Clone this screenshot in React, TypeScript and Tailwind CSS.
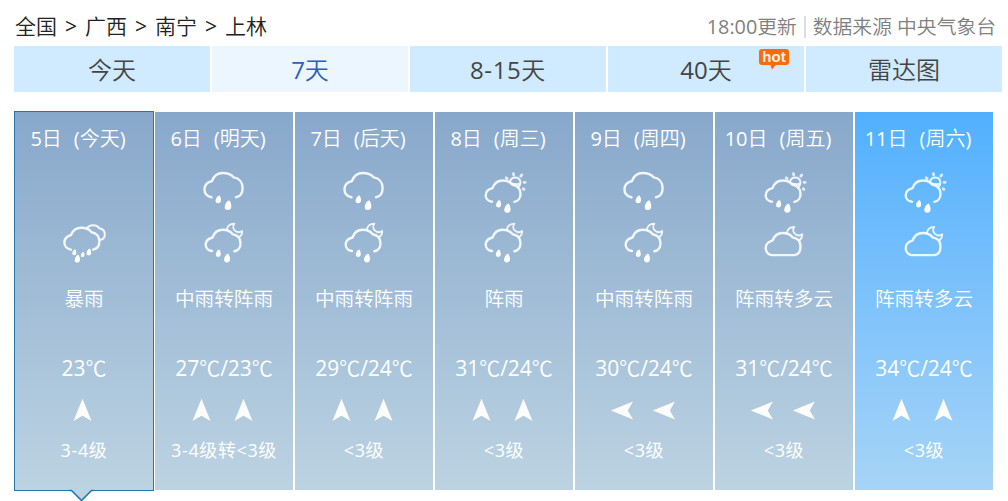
import { Fragment } from "react";
import clsx from "clsx";

type IconName = "storm" | "rain" | "showerDay" | "showerNight" | "cloudyNight";
type Wind = "up" | "left";

interface Day {
  date: string;
  label: string;
  day?: IconName;
  night: IconName;
  weather: string;
  temps: number[];
  wind: Wind[];
  level: string;
}

const CRUMBS = ["全国", "广西", "南宁", "上林"];
const TABS = ["今天", "7天", "8-15天", "40天", "雷达图"];

const DAYS: Day[] = [
  { date: "5日", label: "(今天)", night: "storm", weather: "暴雨", temps: [23], wind: ["up"], level: "3-4级" },
  { date: "6日", label: "(明天)", day: "rain", night: "showerNight", weather: "中雨转阵雨", temps: [27, 23], wind: ["up", "up"], level: "3-4级转<3级" },
  { date: "7日", label: "(后天)", day: "rain", night: "showerNight", weather: "中雨转阵雨", temps: [29, 24], wind: ["up", "up"], level: "<3级" },
  { date: "8日", label: "(周三)", day: "showerDay", night: "showerNight", weather: "阵雨", temps: [31, 24], wind: ["up", "up"], level: "<3级" },
  { date: "9日", label: "(周四)", day: "rain", night: "showerNight", weather: "中雨转阵雨", temps: [30, 24], wind: ["left", "left"], level: "<3级" },
  { date: "10日", label: "(周五)", day: "showerDay", night: "cloudyNight", weather: "阵雨转多云", temps: [31, 24], wind: ["left", "left"], level: "<3级" },
  { date: "11日", label: "(周六)", day: "showerDay", night: "cloudyNight", weather: "阵雨转多云", temps: [34, 24], wind: ["up", "up"], level: "<3级" },
];

const OPEN_CLOUD =
  "M13 34C9 33.5 6.7 30.8 6.7 27.8C6.7 23.8 9.5 21.5 13.5 20.5C15.3 15.5 19 12.8 23.7 12.8C28 12.8 31.5 14.3 33.7 17.2C38.5 18 41.5 21.5 41.5 26.3C41.5 30.5 39 33.7 35.3 34.2";
const CLOSED_CLOUD =
  "M12.5 34.9C9 34.5 6.7 31.3 6.7 28C6.7 23.8 9.5 21.5 13.5 20.5C15.3 15.5 19 12.8 23.7 12.8C28 12.8 31.5 14.3 33.7 17.2C38.5 18 41.5 21.5 41.5 26.3C41.5 31.3 39 34.5 35.3 34.9Z";

// Chinese runs are set a little lighter than the digits beside them
function Mixed({ text }: { text: string }) {
  return (
    <>
      {text.split(/([\u4e00-\u9fff\u2103]+)/).map((run, i) =>
        i % 2 ? (
          <span key={i} className="font-[350]">
            {run}
          </span>
        ) : (
          run
        )
      )}
    </>
  );
}

function Drop({ x, y, s }: { x: number; y: number; s: number }) {
  return (
    <path
      transform={`translate(${x} ${y}) scale(${s})`}
      d="M1.2 -4.9C2.9 -3.4 3.4 0 3.3 1.7C3.2 3.8 1.7 4.9 -0.2 4.9C-2.3 4.9 -3.4 3.5 -3.3 1.8C-3.2 -0.8 -1.4 -4 1.2 -4.9Z"
      fill="white"
      stroke="none"
    />
  );
}

function Moon() {
  return (
    <path
      strokeWidth="1.8"
      d="M27.8 13.2C28.2 9.4 31.2 6.8 35.4 6.6C33.6 9.2 34 12.2 36.3 13.9C38.3 15.5 41 15.6 43.2 14C43.3 16.3 42.4 18.4 40.6 19.9"
    />
  );
}

function WeatherIcon({ name }: { name: IconName }) {
  return (
    <svg width="50" height="50" viewBox="0 0 50 50" fill="none" stroke="white" strokeOpacity="0.88" strokeWidth="2.4" strokeLinecap="round" strokeLinejoin="round">
      {name === "storm" && (
        <>
          <path d="M12 32.6C8 32 5.4 29 5.4 25.6C5.4 21.5 8.2 19.2 12 18C14 13 17.5 10.8 22.3 10.8C26.8 10.8 30.5 12.3 32.6 15.2C37.5 16 40.4 19.8 40.4 24.3C40.4 28.8 38 32 34 32.6" />
          <path strokeWidth="2" d="M27.8 11.8C29 9.3 31.3 8.3 34.3 8.3C37 8.3 38.8 9.3 40.2 11.2C43.6 11.8 45.8 14.2 45.8 17.3C45.8 20.5 44 22.7 41 23" />
          <Drop x={15.3} y={35.2} s={0.6} />
          <Drop x={18.3} y={41.7} s={0.8} />
          <Drop x={23.7} y={37.4} s={0.55} />
          <Drop x={29.8} y={35} s={0.7} />
        </>
      )}
      {name === "rain" && (
        <>
          <path d="M12.5 32.3C8 31.5 5.5 28.3 5.5 24.3C5.5 19.8 9 17 13 16C15 10.5 19 8 23.7 8C28.6 8 32.5 9.6 34.8 12.4C40.2 13.2 43.6 17.5 43.6 23C43.6 28 41 31.6 37 32.3" />
          <Drop x={19.3} y={34.2} s={0.83} />
          <Drop x={29} y={40.1} s={1} />
        </>
      )}
      {name === "showerDay" && (
        <>
          <g transform="translate(0 2.7)">
            <path d={OPEN_CLOUD} />
            <Drop x={19.6} y={36} s={0.76} />
            <Drop x={28.4} y={40.4} s={0.95} />
          </g>
          <path strokeWidth="2" d="M31 16.5C31.8 13.8 34 12.3 36.5 12.4C39.5 12.5 41.5 14.8 41.4 17.8C41.3 20 40.3 21.5 38.8 22.6M31.6 18.2C34 19 36.3 19.4 39.8 19.1" />
          <path strokeWidth="2.8" strokeOpacity="0.75" d="M27.2 12.8L28.2 13.6M34.4 8.6L34.7 10M42.8 9.9L41.8 11.2M45 17.3H46.2M44.2 23.8L45 24.4" />
        </>
      )}
      {name === "showerNight" && (
        <>
          <path d={OPEN_CLOUD} />
          <Moon />
          <Drop x={19.3} y={36.2} s={0.75} />
          <Drop x={28} y={41} s={0.9} />
        </>
      )}
      {name === "cloudyNight" && (
        <g transform="translate(0 3.2)">
          <path d={CLOSED_CLOUD} />
          <Moon />
        </g>
      )}
    </svg>
  );
}

function WindArrow({ dir }: { dir: Wind }) {
  return (
    <svg width="24" height="24" viewBox="0 0 24 24" className={clsx(dir === "left" && "-rotate-90")}>
      <path d="M11.5 0.8L20.5 23L11.5 17.8L2.5 23Z" fill="#fbfcfb" />
    </svg>
  );
}

function DayCard({ item, index }: { item: Day; index: number }) {
  const today = index === 0;
  const last = index === DAYS.length - 1;
  return (
    <div
      className={clsx(
        "relative flex flex-col items-center text-white whitespace-nowrap",
        today ? "w-[140px] h-[380px] border border-[#1f79ad]" : "w-[138px] h-[378px] mt-px",
        index === 1 && "ml-px",
        index > 1 && "ml-0.5",
        last ? "bg-linear-to-b from-[#50b0fe] to-[#a6d4f7]" : "bg-linear-to-b from-[#88a8cb] to-[#bcd3e2]"
      )}
    >
      <div className="h-[53px] leading-[53px] pr-3 flex gap-3 text-[20px]">
        <span>
          <Mixed text={item.date} />
        </span>
        <span>
          <Mixed text={item.label} />
        </span>
      </div>
      <div className="h-[52px]">{item.day && <WeatherIcon name={item.day} />}</div>
      <div className="h-[50px]">
        <WeatherIcon name={item.night} />
      </div>
      <div className="h-[61px] leading-[61px] text-[19.6px] font-[350] font-['Noto_Sans_CJK_SC',sans-serif]">{item.weather}</div>
      <div className="h-[70px] leading-[78px] text-[21px] font-medium">
        {item.temps.map((t, i) => (
          <Fragment key={i}>
            {i > 0 && "/"}
            {t}
            <span className="font-[350] font-['Noto_Sans_CJK_SC',sans-serif]">℃</span>
          </Fragment>
        ))}
      </div>
      <div className="h-6 flex gap-[18px] pr-0.5">
        {item.wind.map((dir, i) => (
          <WindArrow key={i} dir={dir} />
        ))}
      </div>
      <div className="h-14 leading-[56px] text-[18px] tracking-[0.6px]">{item.level}</div>
      {today && (
        <svg className="absolute left-[54px] top-[377px]" width="26" height="13" viewBox="0 0 26 13">
          <path d="M1 0H25L23 1L12.5 11.5L2 1Z" fill="#bcd3e2" />
          <path d="M0.5 1.5H2.5L12.5 11.5L22.5 1.5H24.5" fill="none" stroke="#1f79ad" strokeWidth="1.6" />
        </svg>
      )}
    </div>
  );
}

export default function App() {
  return (
    <div className="w-[1008px] h-[501px] overflow-hidden bg-white font-['Open_Sans','Noto_Sans_CJK_SC',sans-serif]" lang="zh-CN">
      <div className="h-[46px] pt-2 pl-[15px] pr-3 flex items-center justify-between whitespace-nowrap">
        <div className="flex text-[21px] text-[#222]">
          {CRUMBS.map((name, i) => (
            <Fragment key={name}>
              {i > 0 && <span className="w-7 text-center">&gt;</span>}
              <span className="w-[42px] font-[350]">{name}</span>
            </Fragment>
          ))}
        </div>
        <div className="flex items-center text-[19.8px] text-[#808080]">
          <span>
            <Mixed text="18:00更新" />
          </span>
          <span className="w-0.5 h-[22px] mx-[7px] bg-[#dedee2]" />
          <span>
            <Mixed text="数据来源 中央气象台" />
          </span>
        </div>
      </div>

      <div className="ml-3.5 flex gap-0.5">
        {TABS.map((tab, i) => (
          <div
            key={tab}
            className={clsx(
              "relative w-[196px] h-[46px] leading-[48px] text-center text-[24px]",
              i === 1 ? "bg-[#ebf6ff] text-[#2b5fba]" : "bg-[#d0eaff] text-[#444]",
              i === 2 && "tracking-[0.6px]"
            )}
          >
            <Mixed text={tab} />
            {i === 3 && (
              <span className="absolute left-[151px] top-[3px] w-[30px] h-4 rounded-[3px] bg-[#ff6a08] text-[#fff0e6] text-[15px] leading-4 font-bold font-['Liberation_Sans',sans-serif]">
                hot
                <svg className="absolute left-[11px] top-[15px]" width="7" height="6" viewBox="0 0 7 6">
                  <path d="M0 0H6.5L2 5.5Z" fill="#ff6a08" />
                </svg>
              </span>
            )}
          </div>
        ))}
      </div>

      <div className="ml-3.5 mt-[19px] flex items-start">
        {DAYS.map((item, i) => (
          <DayCard key={item.date} item={item} index={i} />
        ))}
      </div>
    </div>
  );
}
